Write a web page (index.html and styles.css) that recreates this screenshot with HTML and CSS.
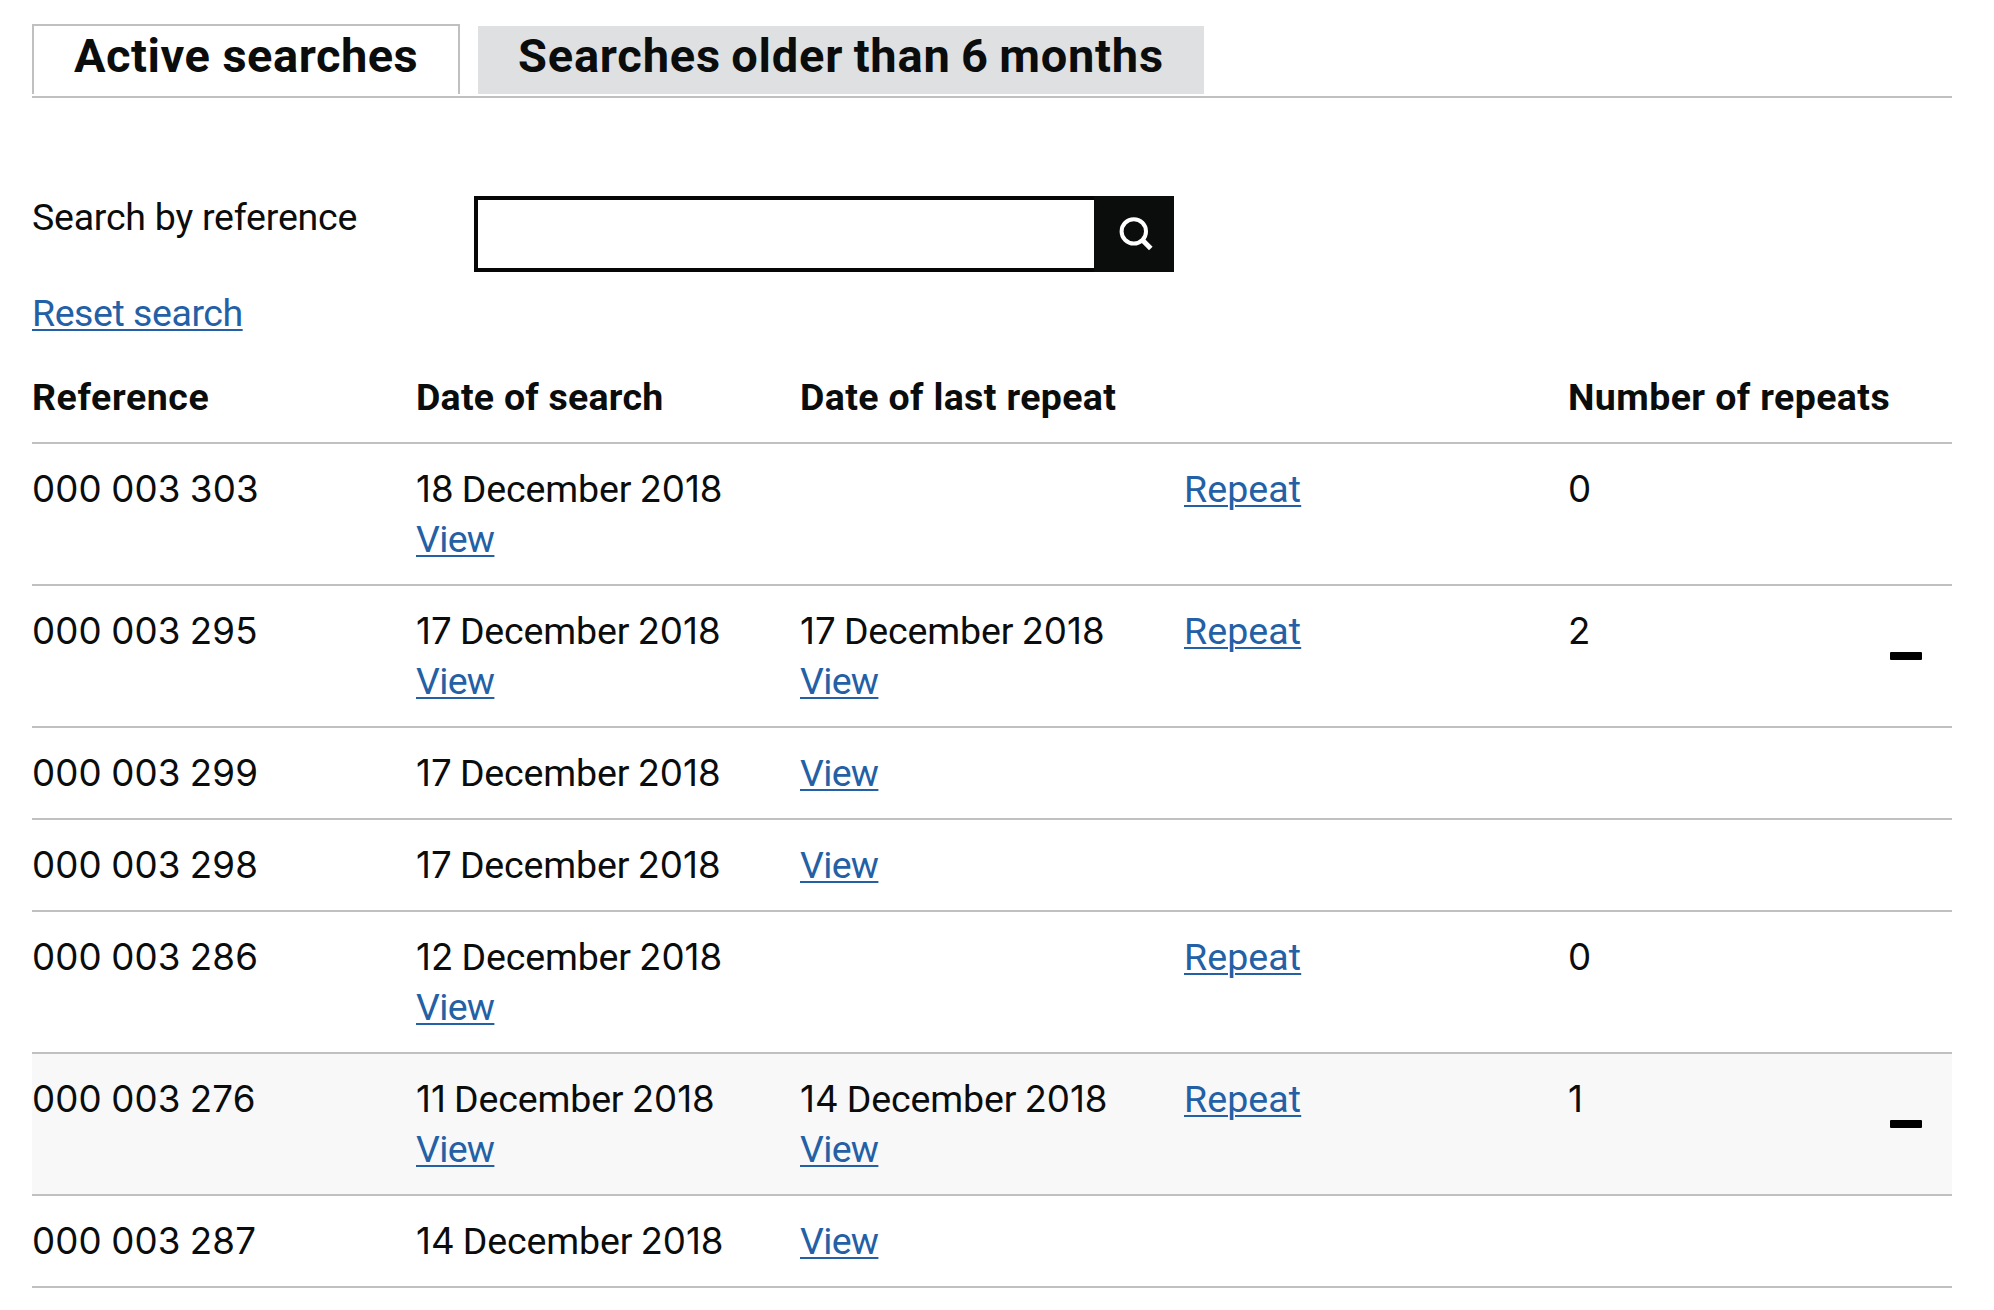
FILE: index.html
```
<!DOCTYPE html>
<html lang="en">
<head>
<meta charset="utf-8">
<title>Active searches</title>
<link rel="stylesheet" href="styles.css">
</head>
<body>
<main class="page">
  <nav class="tabs">
    <a class="tab tab-active" href="#active">Active searches</a>
    <a class="tab tab-older" href="#older">Searches older than 6 months</a>
  </nav>

  <form class="search">
    <label class="search-label" for="reference">Search by reference</label>
    <div class="search-box">
      <input class="search-input" id="reference" type="text">
      <button class="search-button" type="button" aria-label="Search">
        <svg class="search-icon" viewBox="0 0 40 40" fill="none" stroke="#fff">
          <circle cx="19.8" cy="17.4" r="12.2" stroke-width="4"/>
          <path d="M28.1 25.8l8.7 8.7" stroke-width="5"/>
        </svg>
      </button>
    </div>
  </form>
  <div class="reset"><a class="link link-reset" href="#reset">Reset search</a></div>

  <table class="results">
    <thead>
      <tr>
        <th class="th-reference">Reference</th>
        <th class="th-date">Date of search</th>
        <th class="th-last">Date of last repeat</th>
        <th></th>
        <th class="th-count">Number of repeats</th>
      </tr>
    </thead>
    <tbody>
      <tr>
        <td><span class="num">000 003 303</span></td>
        <td><span class="date">18 <span class="month">December</span> 2018</span><a class="link link-view" href="#v">View</a></td>
        <td></td>
        <td><a class="link link-repeat" href="#r">Repeat</a></td>
        <td><span class="num">0</span></td>
      </tr>
      <tr>
        <td><span class="num">000 003 295</span></td>
        <td><span class="date">17 <span class="month">December</span> 2018</span><a class="link link-view" href="#v">View</a></td>
        <td><span class="date">17 <span class="month">December</span> 2018</span><a class="link link-view" href="#v">View</a></td>
        <td><a class="link link-repeat" href="#r">Repeat</a></td>
        <td><div class="count"><span class="num">2</span><span class="minus"></span></div></td>
      </tr>
      <tr>
        <td><span class="num">000 003 299</span></td>
        <td><span class="date">17 <span class="month">December</span> 2018</span></td>
        <td><a class="link link-view" href="#v">View</a></td>
        <td></td>
        <td></td>
      </tr>
      <tr>
        <td><span class="num">000 003 298</span></td>
        <td><span class="date">17 <span class="month">December</span> 2018</span></td>
        <td><a class="link link-view" href="#v">View</a></td>
        <td></td>
        <td></td>
      </tr>
      <tr>
        <td><span class="num">000 003 286</span></td>
        <td><span class="date">12 <span class="month">December</span> 2018</span><a class="link link-view" href="#v">View</a></td>
        <td></td>
        <td><a class="link link-repeat" href="#r">Repeat</a></td>
        <td><span class="num">0</span></td>
      </tr>
      <tr class="row-highlight">
        <td><span class="num">000 003 276</span></td>
        <td><span class="date">11 <span class="month">December</span> 2018</span><a class="link link-view" href="#v">View</a></td>
        <td><span class="date">14 <span class="month">December</span> 2018</span><a class="link link-view" href="#v">View</a></td>
        <td><a class="link link-repeat" href="#r">Repeat</a></td>
        <td><div class="count"><span class="num">1</span><span class="minus"></span></div></td>
      </tr>
      <tr>
        <td><span class="num">000 003 287</span></td>
        <td><span class="date">14 <span class="month">December</span> 2018</span></td>
        <td><a class="link link-view" href="#v">View</a></td>
        <td></td>
        <td></td>
      </tr>
    </tbody>
  </table>
</main>
</body>
</html>
```

FILE: styles.css
```
* {
  box-sizing: border-box;
}

body {
  margin: 0;
  background: #fff;
  color: #0b0c0c;
  font: 400 37.5px/50px Roboto, "Liberation Sans", sans-serif;
}

.page {
  width: 1920px;
  margin: 0 0 0 32px;
  padding-top: 24px;
}

/* Tabs */
.tabs {
  display: flex;
  align-items: flex-end;
  gap: 18px;
  padding-bottom: 2px;
  border-bottom: 2px solid #c0c0c0;
}

.tab {
  padding: 0 40px 8px;
  color: #0b0c0c;
  font-size: 47px;
  font-weight: 700;
  line-height: 60px;
  text-decoration: none;
  white-space: nowrap;
}

.tab-active {
  width: 428px;
  border: 2px solid #c0c0c0;
  border-bottom: 0;
  letter-spacing: 0.5px;
}

.tab-older {
  width: 726px;
  background: #dee0e2;
  letter-spacing: 0.78px;
  word-spacing: -2px;
}

/* Search form */
.search {
  display: flex;
  height: 96px;
  margin-top: 94px;
}

.search-label {
  width: 442px;
  letter-spacing: -0.24px;
}

.search-box {
  display: flex;
  width: 700px;
  height: 76px;
  margin-top: 4px;
}

.search-input {
  flex: 1;
  min-width: 0;
  border: 4px solid #060607;
  border-right: 0;
  border-radius: 0;
  background: #fff;
  font: inherit;
}

.search-button {
  display: flex;
  align-items: center;
  justify-content: center;
  width: 80px;
  padding: 0;
  border: 0;
  background: #0b0c0c;
}

.search-icon {
  width: 40px;
  height: 40px;
}

.reset {
  height: 50px;
  margin-bottom: 14px;
}

.link {
  color: #2360a5;
  text-decoration: underline;
  text-decoration-thickness: 2px;
  text-underline-offset: 3px;
}

.link-reset {
  letter-spacing: -0.45px;
}

.link-view {
  letter-spacing: -0.67px;
}

.link-repeat {
  letter-spacing: 0.1px;
}

/* Results table */
.results {
  width: 100%;
  table-layout: fixed;
  border-spacing: 0;
}

.results th,
.results td {
  padding: 20px 0;
  border-bottom: 2px solid #c0c0c0;
  text-align: left;
  vertical-align: top;
  white-space: nowrap;
}

.results th {
  height: 92px;
  font-weight: 700;
}

.th-reference { letter-spacing: 0.6px; }
.th-date { letter-spacing: 0.24px; }
.th-last { letter-spacing: 0.35px; }
.th-count { letter-spacing: 0.4px; }

.num,
.date {
  display: block;
  font-family: Inter, "Liberation Sans", sans-serif;
  font-size: 36.7px;
}

.num {
  letter-spacing: 0.15px;
  word-spacing: -1.2px;
}

.date {
  letter-spacing: 0;
  word-spacing: -2.1px;
}

.month {
  font-family: Roboto, "Liberation Sans", sans-serif;
  font-size: 37.5px;
  line-height: 1;
  letter-spacing: -0.15px;
}

.row-highlight {
  background: #f8f8f8;
}

.count {
  display: flex;
  justify-content: space-between;
  padding-right: 30px;
}

.minus {
  width: 32px;
  height: 8px;
  margin-top: 46px;
  border-radius: 1px;
  background: #000;
}
```
